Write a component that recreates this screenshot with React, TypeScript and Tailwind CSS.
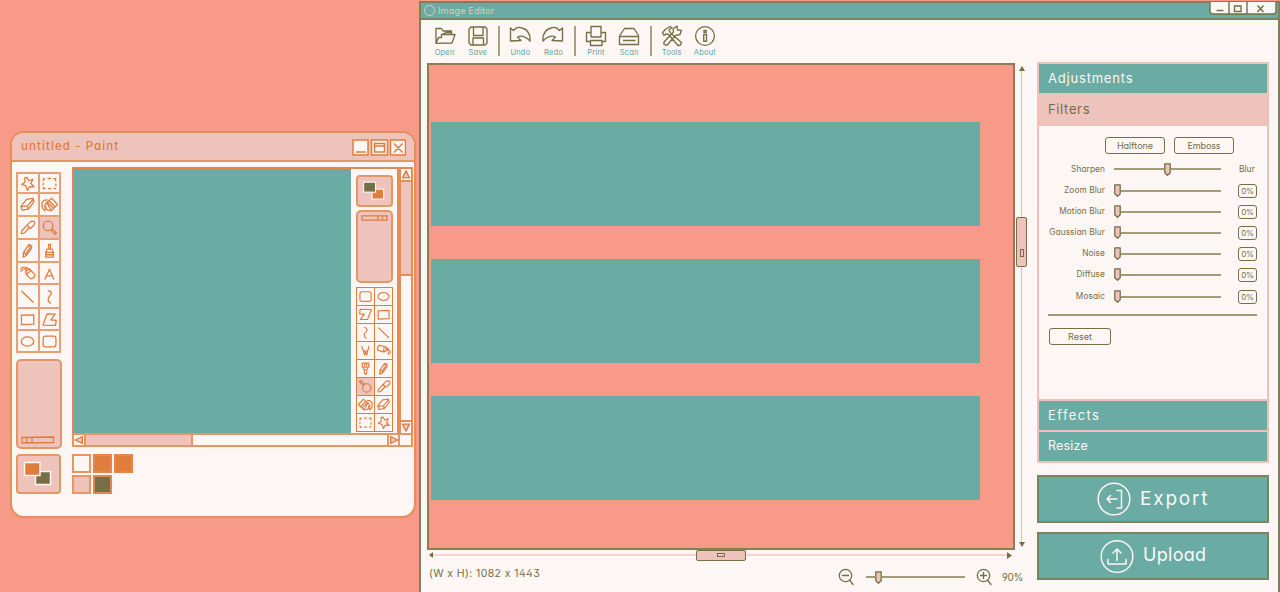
import React from "react";

type Draw = { name: string; className?: string };

const shapes: Record<string, React.ReactNode> = {
  star: <path d="M8.500 2.500l1.800 3.500 4.500-1.500-2.300 4.500 3.500 3.500-4.700-.3-2.500 4-1.500-4.700-4.500-1.500 3.700-2.500-.5-4.500z" />,
  marquee: <path d="M2.500 6V4h1.500M7.500 3.700h2.500M13.500 3.800h2V6M15.800 9.300v1.700M15.500 14.300h-1.500M10.500 14.500H8M4.500 14.500h-2v-1.500M2.300 10.300V9" />,
  eraser: <path d="M2 11l6-7.500 6.500-1 1.500 3.500-6 8-6.500 1-1.500-4zM2.500 11.300l6.500-.800 6.300-7.300M9 10.800l1 3" />,
  bucket: <path d="M6 7l5.500-4.500L17.500 9l-6.500 6.500zM8.500 5l6.500 6.500M6.800 6.500l6.500 6.500M6.500 4L3.500 4.500 1 7l.3 5.500L3.800 15.500l1.700-4M10.500 15.500l-3.500-.5-3.500-4 2.500-4" />,
  dropper: <path d="M2.500 15.500l.5-3 5.500-6 2.500 2.500-5.500 6zM8.500 6.500L12.500 2.500l3-.2 1.200 1.500-.7 2.500L12 10M8.500 6.500l3.500 3.500" />,
  magnifier: <path d="M12.500 7.300a5 5 0 1 1-10 0 5 5 0 0 1 10 0zM10.500 11.800l1.500-1.300 4.300 4.300-1.500 1.700z" />,
  pencil: <path d="M4.500 16l.3-5L10.500 2.700l3 1.300-.5 3-5 7zM10.300 3.500l1.500 2.500L7 12.500M5 11l2.500 2" />,
  brush: <path d="M8 2.500h2v5h1.500l1.500 3v5.500H5V10.500l1.500-3h1.500zM7.500 7.500h3M5 11h8.500M5 13.500h8.500" />,
  spray: <path d="M7 7l4-3 6 6.500-1.500 3.200-3 1-5-5zM10.500 5L8 2.500 5.500 4.500M7.500 3.500v3M1.800 4l1.700-1M2 6.500L4 5M4 2.800l1.500-.5M8.500 9.200l4-3.200" />,
  letter: <path d="M4 15L9 4.500 13.500 15M5.800 11.500h6.200" />,
  line: <path d="M3 3.500l12 11.500" />,
  curve: <path d="M7.500 3c4.500.5 4 3.500 2 5.300C6.500 11 7 14.500 10 16" />,
  rect: <path d="M2.500 4.500l13-.5.2 10-13 .5z" />,
  poly: <path d="M6.500 3l8.500.2L10.500 9.500l5.500.3-.5 5.400-13.500-.2z" />,
  oval: <ellipse cx="9" cy="9" rx="6.600" ry="4.800" />,
  round: <rect x="2.300" y="3.300" width="13.500" height="11.500" rx="2.500" />,
  compass: <path d="M4.500 4l3.500 10.500L9 10.500l1.500 4L13 4M5.800 8.500l3.200 2 3.200-2" />,
  marker: <path d="M5 2.500h8v5H5zM6 7.500l1.500 3h3l1.500-3M7.500 10.500v4L9 16l1.500-1.500v-4M8 3v3M10.500 3v3" />,
};

function Icon({ name, className = "" }: Draw) {
  return (
    <svg viewBox="0 0 18 18" fill="none" stroke="currentColor" strokeWidth="1.350" strokeLinejoin="round" strokeLinecap="round" className={className}>
      {shapes[name]}
    </svg>
  );
}

const leftTools = [
  "star", "marquee", "eraser", "bucket", "dropper", "magnifier", "pencil", "brush",
  "spray", "letter", "line", "curve", "rect", "poly", "oval", "round",
];
const rightTools = [
  "round", "oval", "poly", "rect", "curve", "line", "compass", "spray",
  "marker", "pencil", "magnifier", "dropper", "bucket", "eraser", "marquee", "star",
];
const turned: Record<string, string> = {
  poly: "size-[15px] rotate-180",
  spray: "size-[15px] rotate-[60deg] -scale-x-100",
  magnifier: "size-[15px] rotate-180",
  bucket: "size-[15px] -scale-x-100",
};

function Triangle({ className }: { className: string }) {
  return (
    <svg viewBox="0 0 12 12" className={className} fill="#eec3bc" stroke="#e07c3c" strokeWidth="1.600" strokeLinejoin="round">
      <path d="M6 1.500l4.200 8.500H1.800z" />
    </svg>
  );
}

function Swatches({ a, b, small }: { a: string; b: string; small?: boolean }) {
  return (
    <svg viewBox="0 0 30 26" className={small ? "-ml-px h-[20px] w-[24px]" : "-ml-px h-[26px] w-[30px]"} fill="none" stroke="#fcf6f5" strokeWidth="1.500">
      <rect x="12.500" y="10.500" width="15" height="13" fill={b} />
      <rect x="1.500" y="1.500" width="15.500" height="13" fill={a} />
    </svg>
  );
}

function PaintWindow() {
  return (
    <section className="mt-[131px] ml-[10px] flex h-[387px] w-[406px] shrink-0 flex-col overflow-hidden rounded-[14px] border-2 border-[#e68e5a] bg-[#fcf6f5] text-[#e07c3c]">
      <header className="flex h-[29px] shrink-0 items-center justify-between border-b-2 border-[#e69665] bg-[#eec3bc] pr-[8px] pl-[9px]">
        <span className="pt-px text-[11.500px] font-medium tracking-[1.080px]">untitled - Paint</span>
        <svg viewBox="0 0 54 17" className="mt-[2px] h-[17px] w-[54px]" fill="#fcf6f5" stroke="#e07c3c" strokeWidth="1.500">
          <path d="M1 1h15v15H1zM19.500 1h16v15h-16zM38.500 1h15v15h-15z" />
          <path d="M4 13h10M22.500 4.500h10V13h-10zM22.500 7h10M42 4.500l8.500 9M50.500 4.500l-8.500 9" />
        </svg>
      </header>
      <div className="flex h-[292px] shrink-0 pt-[5px] pl-[4px]">
        <div className="w-[56px] shrink-0 pt-[5px]">
          <div className="grid h-[181px] w-[45px] grid-cols-2 grid-rows-[18px_21px_21px_21px_20px_22px_20px_20px] gap-[2px] bg-[#e8a074] p-[2px]">
            {leftTools.map((t) => (
              <div key={t} className={t === "magnifier" ? "flex items-center justify-center bg-[#eec3bc]" : "flex items-center justify-center bg-[#fcf6f5]"}>
                <Icon name={t} className="size-[17px]" />
              </div>
            ))}
          </div>
          <div className="mt-[6px] flex h-[90px] w-[46px] items-end rounded-[5px] border-2 border-[#e69665] bg-[#eec3bc] pb-[3px] pl-[3px]">
            <svg viewBox="0 0 34 8" className="h-[8px] w-[34px]" fill="none" stroke="#e07c3c" strokeWidth="1.300"><path d="M1 1.500L32.500 1v5.500L1 7zM6 1v6M11 1v6" /></svg>
          </div>
        </div>
        <div className="flex h-[280px] w-[341px] flex-col">
          <div className="flex h-[266px] border-t-2 border-l-2 border-[#e38650]">
            <div className="w-[277px] bg-[#6aaca3]" />
            <div className="w-[46px] px-[5px] pt-[6px]">
              <div className="flex h-[32px] w-[37px] items-center justify-center rounded-[4px] border-2 border-[#e69665] bg-[#eec3bc]">
                <Swatches small a="#746f44" b="#e07c3c" />
              </div>
              <div className="mt-[3px] flex h-[73px] w-[37px] justify-center rounded-[5px] border-2 border-[#e69665] bg-[#eec3bc] pt-[3px]">
                <svg viewBox="0 0 27 6" className="h-[6px] w-[27px]" fill="none" stroke="#e07c3c" strokeWidth="1.300"><path d="M1 .8h25v4.400H1zM17 1v4M21.500 1v4" /></svg>
              </div>
              <div className="mt-[4px] grid h-[145px] w-[37px] grid-cols-2 grid-rows-8 gap-px border border-[#e07c3c] bg-[#e07c3c]">
                {rightTools.map((t) => (
                  <div key={t} className={t === "magnifier" ? "flex items-center justify-center bg-[#eec3bc]" : "flex items-center justify-center bg-[#fcf6f5]"}>
                    <Icon name={t} className={turned[t] ?? "size-[15px]"} />
                  </div>
                ))}
              </div>
            </div>
            <div className="flex w-[16px] flex-col border-r-2 border-l-4 border-[#e58d59]">
              <Triangle className="h-[11px] w-[10px]" />
              <div className="h-[96px] border-y-2 border-[#e58d59] bg-[#eec3bc]" />
              <div className="flex-1" />
              <div className="flex h-[13px] items-center border-t-2 border-[#e58d59]"><Triangle className="h-[11px] w-[10px] rotate-180" /></div>
            </div>
          </div>
          <div className="flex h-[14px] border-2 border-[#e69665]">
            <div className="flex w-[12px] items-center border-r-2 border-[#e69665]"><Triangle className="size-[10px] -rotate-90" /></div>
            <div className="w-[107px] border-r-2 border-[#e69665] bg-[#eec3bc]" />
            <div className="flex-1" />
            <div className="flex w-[13px] items-center border-x-2 border-[#e69665]"><Triangle className="size-[10px] shrink-0 rotate-90" /></div>
            <div className="w-[11px]" />
          </div>
        </div>
      </div>
      <div className="flex pl-[4px]">
        <div className="flex h-[40px] w-[45px] items-center justify-center rounded-[4px] border-2 border-[#e69665] bg-[#eec3bc]">
          <Swatches a="#e07c3c" b="#746f44" />
        </div>
        <div className="ml-[11px] grid h-[40px] grid-cols-[19px_19px_19px] grid-rows-[19px_19px] gap-x-[2px] gap-y-[2px]">
          <div className="border-2 border-[#e69665]" />
          <div className="border-2 border-[#e38650] bg-[#e07c3c]" />
          <div className="border-2 border-[#e38650] bg-[#e07c3c]" />
          <div className="border-2 border-[#e69665] bg-[#eec3bc]" />
          <div className="border-2 border-[#e38650] bg-[#746f44]" />
        </div>
      </div>
    </section>
  );
}

const commands: { label: string; icon: React.ReactNode; bar?: boolean }[] = [
  { label: "Open", icon: <path d="M2 18.300V3.500h5.500L9 6h8.500v3M2 18.300L4.500 12.500h3V9.500h13.500L18 18zM8.500 9.300l3.500-1.800h5" /> },
  { label: "Save", icon: <path d="M4 2h14l2 2v14l-2 2H4l-2-2V4zM6.500 2v8.500h9.500V2M6 20v-7h10.500v7" /> },
  { label: "Undo", bar: true, icon: <path d="M1.500 3v13l10.500-.5-3.500-3.500c5-2.500 9 .5 12.500 4 .5-7-2.500-11.500-8-13C9 1.500 6 3.500 4.500 5.500z" /> },
  { label: "Redo", icon: <path d="M20.500 3v13l-10.500-.5 3.500-3.500c-5-2.500-9 .5-12.500 4-.5-7 2.500-11.500 8-13C13 1.500 16 3.500 17.500 5.500z" /> },
  { label: "Print", bar: true, icon: <path d="M6 12V1.500h10V12M6 7.500H1.500v9h4M16 7.500h4.500v9h-4M6 12h10M5.500 15.500h11.500v5h-11.500z" /> },
  { label: "Scan", icon: <path d="M6.500 3.500h9.500l4.500 7v9H1.500V11zM1.500 11.500h19M5 15.500h12.500" /> },
  { label: "Tools", bar: true, icon: <path d="M1.500 8L4 4.500 9 1.500l2 1-3 2.500L9.500 8 20.500 17.500l-1 2.500-2.500.5L7.500 9.500l-3-.5L3 10.500zM12.500 7L12 4l4-3 .5 4 4 .3L19 9.500l-4.500.8-8.500 10-3-1V17l9.500-10" /> },
  { label: "About", icon: <><circle cx="11" cy="11" r="9.400" /><path d="M9.700 9.700l2.800-.3V16.200H9.700zM10 5.500h2.200v2H10z" /></> },
];

function Toolbar() {
  return (
    <div className="flex h-[43px] shrink-0 pt-[5px] pl-[7px]">
      {commands.map((c) => (
        <React.Fragment key={c.label}>
          {c.bar && <div className="mt-px -mr-px ml-[4px] h-[30px] w-[2px] shrink-0 self-start bg-[#a5a17f]" />}
          <div className={c.bar ? "ml-[4.500px] flex w-[33px] flex-col items-center" : "flex w-[33.200px] flex-col items-center"}>
            <svg viewBox="0 0 22 22" className="h-[22px] w-[22px]" fill="none" stroke="#746f44" strokeWidth="1.350" strokeLinejoin="round">{c.icon}</svg>
            <span className="pt-px text-[7.500px] leading-[10px] tracking-[0.200px] text-[#5aa69c]">{c.label}</span>
          </div>
        </React.Fragment>
      ))}
    </div>
  );
}

function Thumb() {
  return (
    <svg viewBox="0 0 7 13" className="h-[13px] w-[7px] shrink-0" fill="#eec3bc" stroke="#746f44" strokeWidth="1.300" strokeLinejoin="round">
      <path d="M.8.800h5.400v9L3.500 12.200.8 9.800z" />
    </svg>
  );
}

function FilterRow({ label, h, end }: { label: string; h: string; end?: boolean }) {
  return (
    <div className={`flex items-center ${h}`}>
      <span className="w-[57px] text-right text-[8.300px] tracking-[0.080px] whitespace-nowrap">{label}</span>
      <div className="ml-[9px] flex w-[107px] items-center">
        {end && <div className="h-[2px] w-[50px] bg-[#a09c78]" />}
        <Thumb />
        <div className="h-[2px] flex-1 bg-[#a09c78]" />
      </div>
      {end ? (
        <span className="ml-[18px] text-[8.500px]">Blur</span>
      ) : (
        <span className="mt-px ml-[17px] flex h-[14px] w-[19px] items-center justify-center rounded-[3px] border-[1.500px] border-[#746f44] text-[8px] tracking-[-0.300px]">0%</span>
      )}
    </div>
  );
}

function ActionButton({ label, children, className }: { label: string; children: React.ReactNode; className: string }) {
  return (
    <button className={`flex h-[48px] w-[232px] items-center border-2 border-[#7a8560] bg-[#6aaca3] text-[#fcf6f5] ${className}`}>
      <svg viewBox="0 0 34 34" className="mr-[9px] size-[34px]" fill="none" stroke="#fcf6f5" strokeWidth="1.500" strokeLinecap="round" strokeLinejoin="round">
        <circle cx="17" cy="17" r="15.800" />
        {children}
      </svg>
      <span>{label}</span>
    </button>
  );
}

function SidePanel() {
  return (
    <aside className="ml-[9px] w-[232px] shrink-0 text-[#746f44]">
      <div className="-mt-px flex h-[401px] flex-col border-2 border-[#f0bfb8]">
        <div className="flex h-[29px] items-center bg-[#6aaca3] pl-[9px] text-[13px] tracking-[0.800px] text-[#fcf6f5]">Adjustments</div>
        <div className="flex h-[33px] items-center bg-[#eec3bc] pl-[9px] text-[13px] tracking-[0.650px]">Filters</div>
        <div className="flex h-[273px] flex-col pt-[11px] pl-[9px]">
          <div className="flex gap-[9px] pl-[57px] text-[9px]">
            <span className="flex h-[17px] w-[60px] items-center justify-center rounded-[3px] border-[1.500px] border-[#746f44]">Halftone</span>
            <span className="flex h-[17px] w-[60px] items-center justify-center rounded-[3px] border-[1.500px] border-[#746f44] tracking-[-0.150px]">Emboss</span>
          </div>
          <div className="pt-[4px]">
            <FilterRow end label="Sharpen" h="h-[22px]" />
            <FilterRow label="Zoom Blur" h="h-[21px]" />
            <FilterRow label="Motion Blur" h="h-[21px]" />
            <FilterRow label="Gaussian Blur" h="h-[21px]" />
            <FilterRow label="Noise" h="h-[21px]" />
            <FilterRow label="Diffuse" h="h-[21px]" />
            <FilterRow label="Mosaic" h="h-[23px]" />
          </div>
          <div className="mt-[6px] h-[2px] w-[209px] bg-[#a09c78]" />
          <span className="mt-[12px] ml-px flex h-[17px] w-[62px] items-center justify-center rounded-[3px] border-[1.500px] border-[#746f44] text-[9px]">Reset</span>
        </div>
        <div className="flex h-[31px] items-center border-t-2 border-[#f0bfb8] bg-[#6aaca3] pb-px pl-[9px] text-[13px] tracking-[1.400px] text-[#fcf6f5]">Effects</div>
        <div className="flex flex-1 items-center border-t-2 border-[#f0bfb8] bg-[#6aaca3] pl-[9px] text-[12.500px] tracking-[0.200px] text-[#fcf6f5]">Resize</div>
      </div>
      <ActionButton label="Export" className="mt-[12px] pb-[2px] pl-[58px] text-[19px] tracking-[1.800px] [&_svg]:translate-y-px">
        <path d="M20 17H10M13.500 13.500l-3.500 3.500 3.500 3.500M20 8.500h4.500v17.500H20" />
      </ActionButton>
      <ActionButton label="Upload" className="mt-[9px] pb-[3px] pl-[61px] text-[18px] tracking-[0.300px] [&_svg]:translate-y-[1.500px]">
        <path d="M17 21V10M13 13.500l4-4 4 4M8 20v4.500h18V20" />
      </ActionButton>
    </aside>
  );
}

function ZoomGlass({ plus }: { plus?: boolean }) {
  return (
    <svg viewBox="0 0 16 18" className="h-[18px] w-[16px]" fill="none" stroke="#746f44" strokeWidth="1.300" strokeLinecap="round">
      <circle cx="7.500" cy="7.500" r="6.200" />
      <path d="M4.500 7.500h6M11.500 12l3.500 4.500" />
      {plus && <path d="M7.500 4.500v6" />}
    </svg>
  );
}

function EditorWindow() {
  return (
    <section className="mt-px ml-[3px] flex h-[591px] w-[861px] shrink-0 flex-col border-x-2 border-t-2 border-[#7d8059] bg-[#fcf6f5] text-[#746f44]">
      <header className="flex h-[17px] shrink-0 justify-between border-b-2 border-[#7d8059] bg-[#6aaca3]">
        <div className="flex items-center pl-[3px] text-[9px] tracking-[0.200px] text-[#e2c8bd]">
          <span className="mr-[3px] size-[11px] rounded-full border-[1.500px] border-[#e2c8bd]" />
          Image Editor
        </div>
        <svg viewBox="0 0 68 13" className="-mt-px mr-px h-[13px] w-[68px]" fill="#fcf6f5" stroke="#746f44" strokeWidth="1.400">
          <path d="M1 0v9q0 3 3 3h60q3 0 3-3V0M20 0v12M38 0v12" />
          <path d="M7.500 8.500h7M25.500 4h6.500v5.500H25.500zM48.500 3.500l6 6.500M54.500 3.500l-6 6.500" />
        </svg>
      </header>
      <Toolbar />
      <div className="flex">
        <div className="ml-[6px] w-[588px] shrink-0">
          <div className="flex h-[487px] flex-col gap-[33px] border-2 border-[#8f7b52] bg-[#f79a87] pt-[57px] pl-[2px]">
            <div className="h-[104px] w-[549px] shrink-0 bg-[#6aaca3]" />
            <div className="h-[104px] w-[549px] shrink-0 bg-[#6aaca3]" />
            <div className="h-[104px] w-[549px] shrink-0 bg-[#6aaca3]" />
          </div>
          <div className="-mt-px flex h-[12px] items-center pl-[2px]">
            <svg viewBox="0 0 4 6" className="h-[6px] w-[4px]" fill="#746f44"><path d="M4 0v6L0 3z" /></svg>
            <div className="h-[2px] w-[263px] bg-[#f6d3ce]" />
            <div className="flex h-[11px] w-[50px] items-center justify-center rounded-[2px] border-[1.500px] border-[#746f44] bg-[#eec3bc]">
              <div className="h-[4px] w-[8px] border border-[#746f44]" />
            </div>
            <div className="h-[2px] w-[261px] bg-[#f6d3ce]" />
            <svg viewBox="0 0 5 7" className="h-[7px] w-[5px]" fill="#746f44"><path d="M0 0l5 3.500L0 7z" /></svg>
          </div>
          <div className="flex h-[32px] items-center pl-[2px] whitespace-nowrap">
            <span className="w-[409px] shrink-0 pb-[6px] text-[10.500px] tracking-[0.400px]">(W x H): 1082 x 1443</span>
            <span className="shrink-0"><ZoomGlass /></span>
            <div className="ml-[12px] flex w-[99px] shrink-0 items-center">
              <div className="h-[2px] w-[9px] bg-[#a09c78]" />
              <Thumb />
              <div className="h-[2px] flex-1 bg-[#a09c78]" />
            </div>
            <span className="ml-[11px] shrink-0"><ZoomGlass plus /></span>
            <span className="ml-[10px] text-[10px] tracking-[-0.300px]">90%</span>
          </div>
        </div>
        <div className="ml-px flex h-[484px] w-[11px] flex-col items-center pt-[3px]">
          <svg viewBox="0 0 6 5" className="h-[5px] w-[6px] shrink-0" fill="#746f44"><path d="M3 0l3 5H0z" /></svg>
          <div className="h-[146px] w-px shrink-0 bg-[#f0b9b2]" />
          <div className="flex h-[50px] w-[11px] shrink-0 items-end justify-center rounded-[2px] border-[1.500px] border-[#746f44] bg-[#eec3bc] pb-[9px]">
            <div className="h-[8px] w-[4px] border border-[#746f44]" />
          </div>
          <div className="w-px flex-1 bg-[#f0b9b2]" />
          <svg viewBox="0 0 6 5" className="h-[5px] w-[6px] shrink-0" fill="#746f44"><path d="M3 5l3-5H0z" /></svg>
        </div>
        <div className="w-px shrink-0" />
        <SidePanel />
      </div>
    </section>
  );
}

export default function App() {
  return (
    <main className="flex h-[592px] w-[1280px] overflow-hidden bg-[#f79a87] font-['Inter',sans-serif] leading-none [font-feature-settings:'cv11','ss01']">
      <PaintWindow />
      <EditorWindow />
    </main>
  );
}
